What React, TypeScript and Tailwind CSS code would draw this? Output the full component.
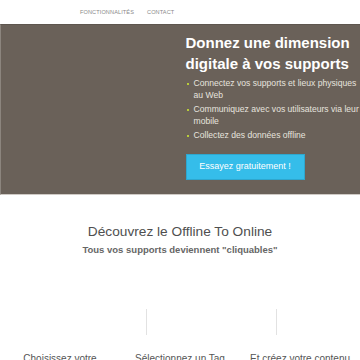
export default function App() {
  const bullets = [
    ["Connectez vos supports et lieux physiques", "au Web"],
    ["Communiquez avec vos utilisateurs via leur", "mobile"],
    ["Collectez des données offline"],
  ];
  const steps = [
    { label: "Choisissez votre", line: "" },
    { label: "Sélectionnez un Tag", line: "ml-[26px]" },
    { label: "Et créez votre contenu", line: "ml-[36px]" },
  ];
  return (
    <div className="w-[360px] h-[360px] overflow-hidden bg-white font-['Liberation_Sans',Arial,sans-serif]">
      {/* nav */}
      <div className="h-[24px] flex items-center pl-[80px] gap-[13px] text-[5.6px] uppercase text-[#8a8a8a] tracking-[0.1px]">
        <span>Fonctionnalités</span>
        <span>Contact</span>
      </div>

      {/* hero */}
      <div className="h-[171px] bg-[#6a6159] border-t border-[#5e564f] border-l border-l-[#8c857e] border-b border-b-[#cfcac5] grid grid-cols-2">
        <div />
        <div className="pl-[5px] pt-[7px]">
          <h1 className="text-[15px] font-bold leading-[21px] text-white">
            Donnez une dimension digitale à vos supports
          </h1>
          <ul className="mt-[3px] text-[8.6px] leading-[12px] text-[#e6e3df]">
            {bullets.map((b) => (
              <li key={b[0]} className="flex mb-[2px]">
                <span className="w-[2px] h-[2px] bg-[#b8cc3a] mt-[5.5px] ml-[1px] mr-[5px] shrink-0" />
                <span className="whitespace-nowrap">
                  {b.map((l, i) => (
                    <span key={l}>
                      {i > 0 && <br />}
                      {l}
                    </span>
                  ))}
                </span>
              </li>
            ))}
          </ul>
          <button className="mt-[11px] w-[119px] h-[26px] bg-[#35bdea] border border-[#2ea7cf] text-white text-[9px]">
            Essayez gratuitement !
          </button>
        </div>
      </div>

      {/* section */}
      <div className="text-center pt-[28px]">
        <h2 className="text-[13.7px] leading-[17px] text-[#4f4f4f]">Découvrez le Offline To Online</h2>
        <p className="mt-[3px] text-[9.5px] leading-[14px] font-bold text-[#666]">
          Tous vos supports deviennent "cliquables"
        </p>
      </div>

      <div className="grid grid-cols-3 mt-[52px]">
        {steps.map((s) => (
          <div key={s.label} className="flex flex-col">
            <div className="h-[26px]">
              {s.line && <div className={`w-px h-[26px] bg-[#e2e2e2] ${s.line}`} />}
            </div>
            <div className="mt-[17px] text-center text-[10px] leading-[14px] text-[#555]">{s.label}</div>
          </div>
        ))}
      </div>
    </div>
  );
}
